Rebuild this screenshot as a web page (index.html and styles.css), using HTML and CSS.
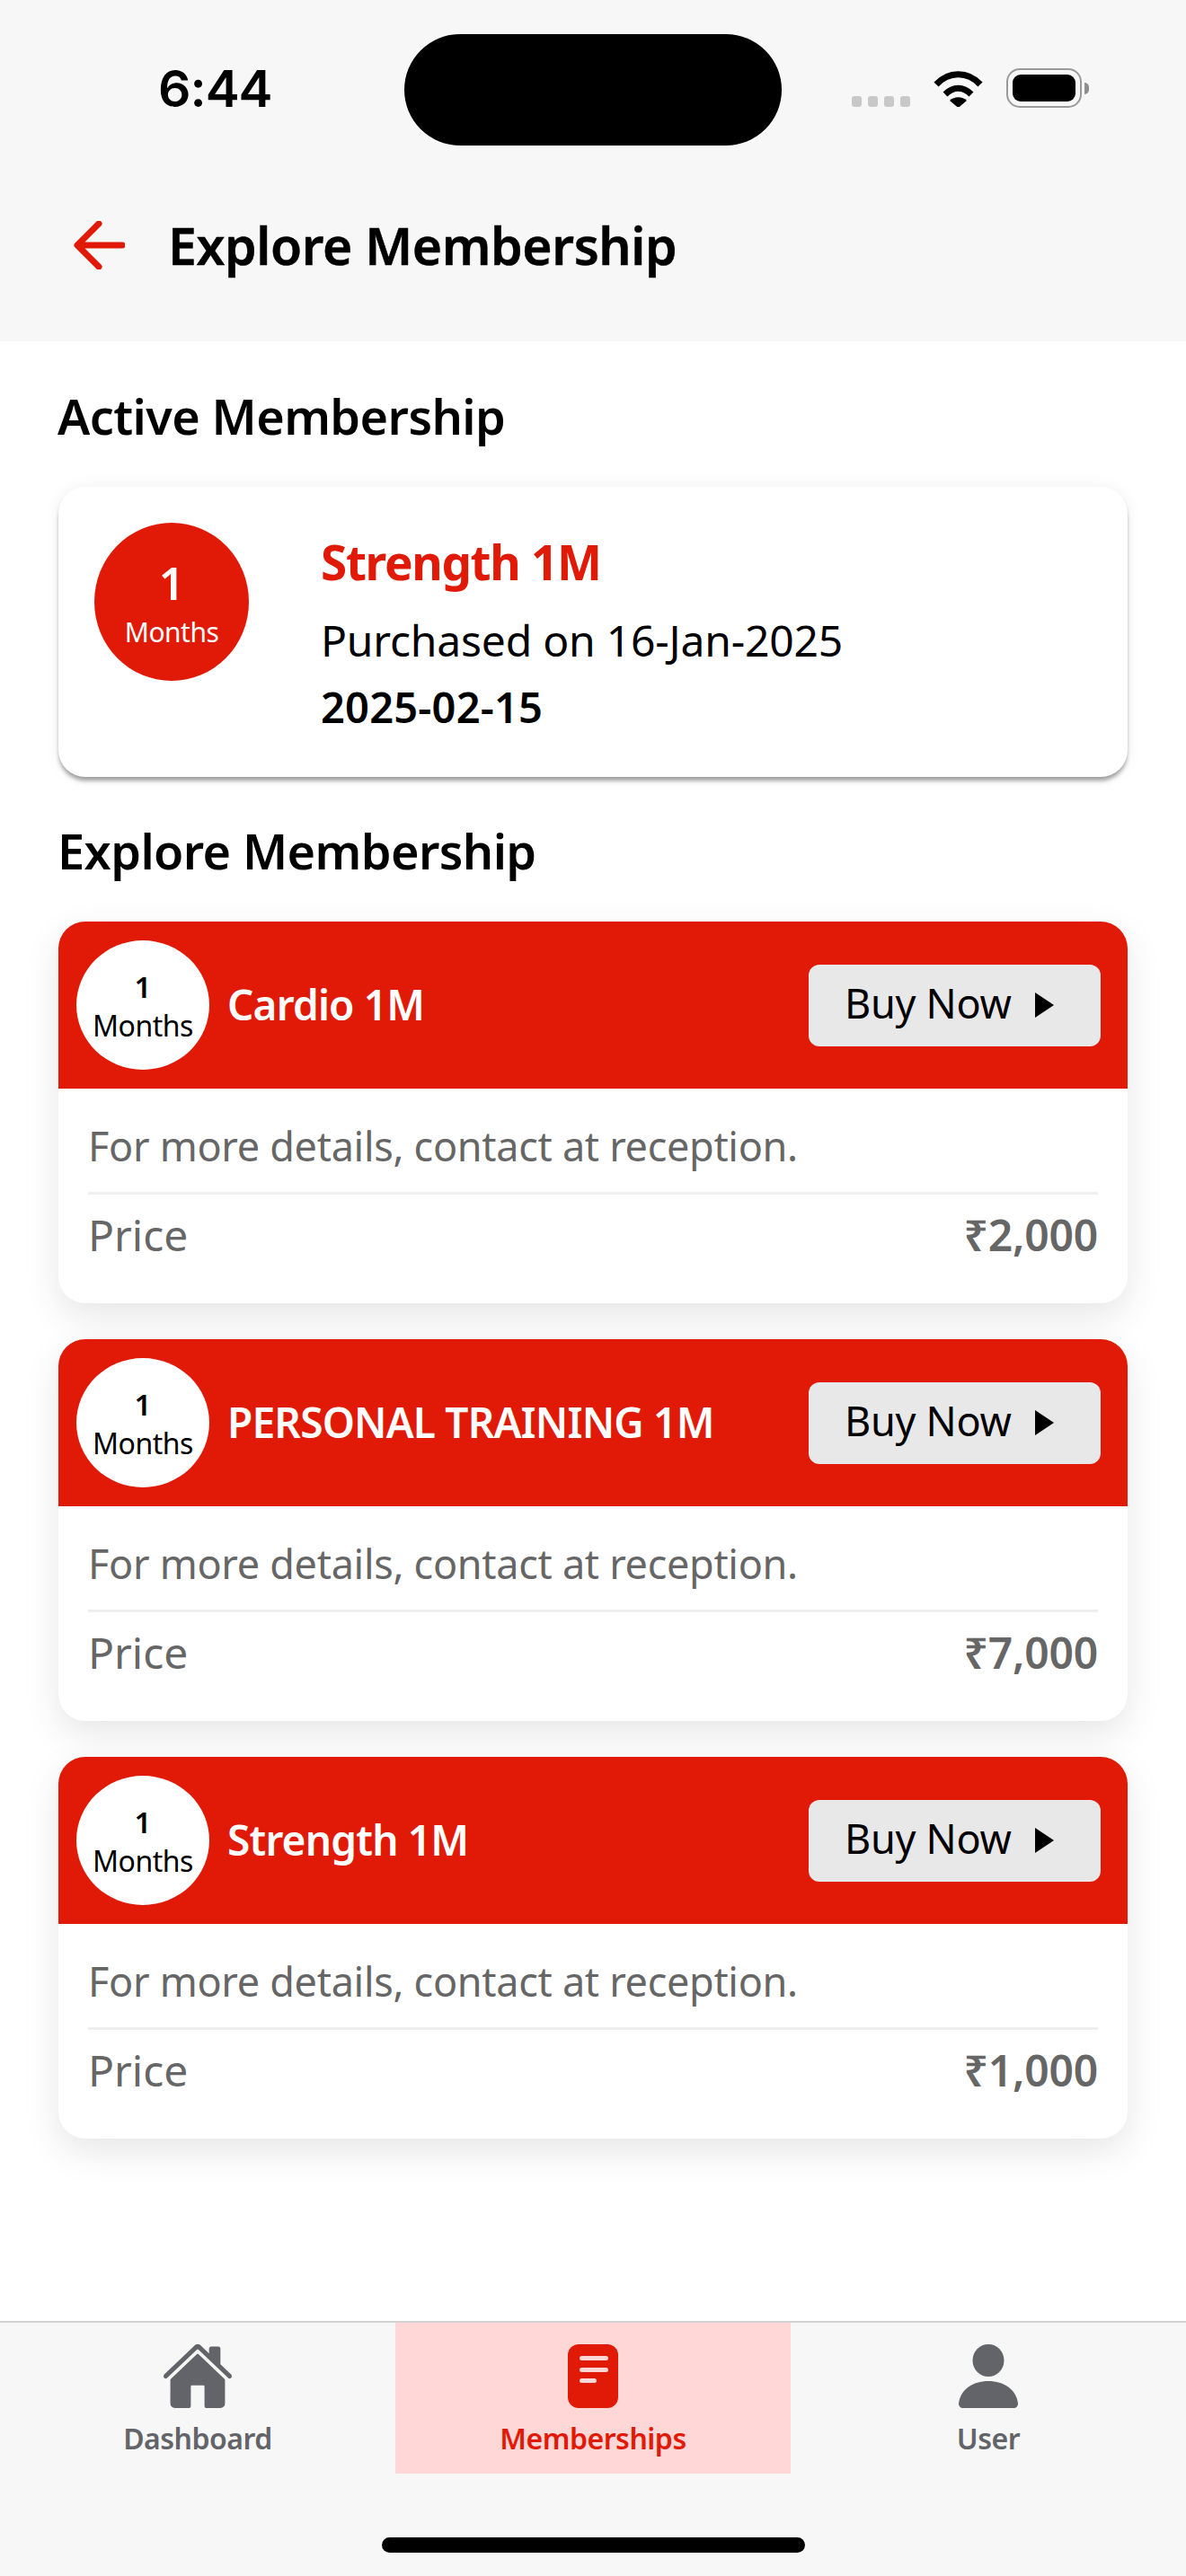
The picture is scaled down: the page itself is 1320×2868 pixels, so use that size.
FILE: index.html
```html
<!DOCTYPE html>
<html lang="en">
<head>
<meta charset="utf-8">
<title>Explore Membership</title>
<link rel="stylesheet" href="styles.css">
</head>
<body>
<div class="screen">
  <header class="top">
    <div class="status">
      <span class="time">6:44</span>
      <span class="island"></span>
      <div class="status-icons">
        <div class="signal"><i></i><i></i><i></i><i></i></div>
        <svg class="wifi" viewBox="0 0 57 42"><path d="M4 17C18 2 39 2 53 17" /><path d="M14 28C23 19 34 19 43 28" /><path class="wifi-dot" d="M19 35C24 30 33 30 38 35L28.500 43Z" /></svg>
        <div class="battery"><span class="battery-level"></span></div>
        <span class="battery-nub"></span>
      </div>
    </div>
    <div class="appbar">
      <svg class="back" viewBox="0 0 57 54"><path d="M54 27H5M28 3L4 27L28 51" /></svg>
      <h1>Explore Membership</h1>
    </div>
  </header>

  <main class="content">
    <h2 class="section-title active-title">Active Membership</h2>
    <section class="active-card">
      <div class="badge badge-red"><b>1</b><span>Months</span></div>
      <div class="active-info">
        <div class="active-name">Strength 1M</div>
        <div class="active-date">Purchased on 16-Jan-2025</div>
        <div class="active-expiry">2025-02-15</div>
      </div>
    </section>

    <h2 class="section-title explore-title">Explore Membership</h2>
    <div class="plans">
      <article class="plan">
        <div class="plan-head">
          <div class="badge badge-white"><b>1</b><span>Months</span></div>
          <div class="plan-name">Cardio 1M</div>
          <button class="buy"><span class="buy-label">Buy Now</span><i class="caret"></i></button>
        </div>
        <div class="plan-body">
          <p class="plan-note">For more details, contact at reception.</p>
          <div class="plan-price"><span>Price</span><strong>₹2,000</strong></div>
        </div>
      </article>
      <article class="plan">
        <div class="plan-head">
          <div class="badge badge-white"><b>1</b><span>Months</span></div>
          <div class="plan-name">PERSONAL TRAINING 1M</div>
          <button class="buy"><span class="buy-label">Buy Now</span><i class="caret"></i></button>
        </div>
        <div class="plan-body">
          <p class="plan-note">For more details, contact at reception.</p>
          <div class="plan-price"><span>Price</span><strong>₹7,000</strong></div>
        </div>
      </article>
      <article class="plan">
        <div class="plan-head">
          <div class="badge badge-white"><b>1</b><span>Months</span></div>
          <div class="plan-name">Strength 1M</div>
          <button class="buy"><span class="buy-label">Buy Now</span><i class="caret"></i></button>
        </div>
        <div class="plan-body">
          <p class="plan-note">For more details, contact at reception.</p>
          <div class="plan-price"><span>Price</span><strong>₹1,000</strong></div>
        </div>
      </article>
    </div>
  </main>

  <footer class="bottom">
    <nav class="tabs">
      <a class="tab">
        <svg class="tab-icon home" viewBox="16 32 480 448"><path d="M261.560 101.280a8 8 0 00-11.060 0L66.400 277.150a8 8 0 00-2.470 5.790L63.900 448a32 32 0 0032 32H192a16 16 0 0016-16V328a8 8 0 018-8h80a8 8 0 018 8v136a16 16 0 0016 16h96.060a32 32 0 0032-32V282.940a8 8 0 00-2.470-5.790z"/><path d="M490.910 244.150l-74.800-71.560V64a16 16 0 00-16-16h-48a16 16 0 00-16 16v32l-57.920-55.380C272.770 35.140 264.710 32 256 32c-8.680 0-16.720 3.140-22.140 8.630l-212.700 203.500c-6.220 6-7 15.870-1.340 22.370A16 16 0 0043 267.560L250.500 69.280a8 8 0 0111.060 0l207.520 198.280a16 16 0 0022.590-.44c6.140-6.360 5.630-16.860-.76-22.970z"/></svg>
        <span>Dashboard</span>
      </a>
      <a class="tab tab-active">
        <svg class="tab-icon doc" viewBox="0 0 56 71"><rect width="56" height="71" rx="12"/><path class="doc-line" d="M15.500 15.500h27M15.500 28.500h27M15.500 40.500h14"/></svg>
        <span>Memberships</span>
      </a>
      <a class="tab">
        <svg class="tab-icon user" viewBox="0 0 66 71"><ellipse cx="33" cy="18" rx="17.500" ry="18"/><path d="M33 41C50 41 64 50 66 66C66 69 64 71 61 71H5C2 71 0 69 0 66C2 50 16 41 33 41Z"/></svg>
        <span>User</span>
      </a>
    </nav>
    <div class="home-bar"></div>
  </footer>
</div>
</body>
</html>
```

FILE: styles.css
```css
* { box-sizing: border-box; }

html, body { margin: 0; padding: 0; background: #fff; }

body {
  font-family: "Noto Sans", "Open Sans", sans-serif;
  color: #000;
}

.screen {
  width: 1320px;
  height: 2868px;
  display: flex;
  flex-direction: column;
  overflow: hidden;
}

/* Status bar and title */
.top { height: 380px; background: #f7f7f7; flex: none; }

.status {
  display: grid;
  grid-template-columns: 450px 420px 1fr;
  height: 162px;
  padding-top: 38px;
}

.time {
  font-family: Inter, sans-serif;
  font-size: 57px;
  font-weight: 600;
  line-height: 66px;
  padding: 28px 0 0 176px;
  letter-spacing: -1px;
}

.island { height: 124px; border-radius: 62px; background: #000; }

.status-icons {
  display: flex;
  align-items: flex-start;
  padding: 38px 0 0 78px;
}

.signal { display: flex; gap: 7px; margin-top: 31px; }
.signal i { width: 11px; height: 12px; border-radius: 3px; background: #c8c8c8; }

.wifi { width: 57px; height: 42px; margin: 1px 0 0 25px; fill: none; stroke: #000; stroke-width: 7; }
.wifi-dot { fill: #000; stroke: none; }

.battery {
  width: 84px;
  height: 44px;
  margin-left: 25px;
  padding: 5px;
  border: 2.500px solid #9a9a9a;
  border-radius: 15px;
}
.battery-level { display: block; height: 100%; border-radius: 9px; background: #000; }
.battery-nub {
  width: 5px;
  height: 13px;
  margin: 16px 0 0 3px;
  border-radius: 0 6px 6px 0;
  background: #8f8f8f;
}

.appbar {
  display: flex;
  align-items: center;
  height: 108px;
  margin-top: 57px;
  padding-left: 82px;
  gap: 48px;
}

.back { width: 57px; height: 54px; fill: none; stroke: #e11a07; stroke-width: 7; stroke-linecap: round; stroke-linejoin: round; }

h1 { margin: 0; font-size: 57px; font-weight: 600; line-height: 70px; letter-spacing: -0.4px; -webkit-text-stroke: 0.5px #000; }

/* Page body */
.content { flex: 1; padding: 0 65px; }

.section-title { margin: 0; font-size: 54px; font-weight: 600; line-height: 66px; letter-spacing: -0.6px; }
.active-title { padding-top: 50px; height: 116px; margin-left: -1px; }
.explore-title { margin-top: 49px; margin-left: -1px; }

.active-card {
  display: flex;
  height: 323px;
  margin-top: 46px;
  padding: 40px 0 0 40px;
  gap: 80px;
  border-radius: 30px;
  background: #fff;
  box-shadow: 0 5px 5px -1px rgba(0, 0, 0, .38), 0 0 18px rgba(0, 0, 0, .06);
}

.badge {
  display: flex;
  flex: none;
  flex-direction: column;
  align-items: center;
  border-radius: 50%;
}

.badge-red { width: 172px; height: 176px; padding-top: 37px; background: #e11a07; color: #fff; }
.badge-red b { font-size: 50px; font-weight: 600; line-height: 60px; }
.badge-red span { font-size: 30px; line-height: 42px; margin-top: 4px; letter-spacing: -0.5px; }

.badge-white { width: 148px; height: 144px; padding-top: 32px; background: #fff; color: #000; }
.badge-white b { font-size: 33px; font-weight: 600; line-height: 40px; }
.badge-white span { font-size: 32px; line-height: 46px; letter-spacing: -0.5px; }

.active-info { padding-top: 8px; }
.active-name { color: #e11a07; font-size: 53px; font-weight: 700; line-height: 72px; letter-spacing: -1.3px; }
.active-date { font-size: 48px; line-height: 70px; margin-top: 16px; letter-spacing: -0.2px; }
.active-expiry { font-size: 47px; font-weight: 600; line-height: 70px; margin-top: 4px; letter-spacing: 0.2px; }

.plans { display: flex; flex-direction: column; gap: 40px; margin-top: 46px; }

.plan {
  height: 425px;
  border-radius: 30px;
  background: #fff;
  box-shadow: 0 14px 40px rgba(0, 0, 0, .1);
}

.plan-head {
  display: flex;
  align-items: center;
  height: 186px;
  padding: 0 30px 0 20px;
  border-radius: 30px 30px 0 0;
  background: #e11a07;
}

.plan-name { flex: 1; margin-left: 20px; margin-bottom: 2px; color: #fff; font-size: 46px; font-weight: 600; line-height: 60px; letter-spacing: -0.8px; }

.buy {
  display: flex;
  align-items: center;
  width: 325px;
  height: 91px;
  margin-top: 0;
  padding: 0 0 0 40px;
  border: 0;
  border-radius: 12px;
  background: #e8e8e8;
  color: #000;
  font: 400 45px/60px "Noto Sans", sans-serif;
  letter-spacing: -0.3px;
}
.buy-label { margin-top: -4px; }

.caret {
  width: 0;
  height: 0;
  margin-left: 26px;
  border-left: 21px solid #000;
  border-top: 14px solid transparent;
  border-bottom: 14px solid transparent;
}

.plan-body { padding: 0 33px; color: #666; }

.plan-note {
  margin: 0;
  height: 118px;
  padding-top: 34px;
  border-bottom: 3px solid #efefef;
  font-size: 45px;
  line-height: 60px;
  letter-spacing: -0.3px;
}

.plan-price {
  display: flex;
  justify-content: space-between;
  padding-top: 12px;
  font-size: 48px;
  line-height: 66px;
}
.plan-price strong { font-weight: 600; letter-spacing: -0.2px; }

/* Tab bar */
.bottom { flex: none; height: 284px; border-top: 2px solid #d2d2d2; background: #f7f7f7; }

.tabs { display: grid; grid-template-columns: repeat(3, 440px); height: 168px; }

.tab {
  display: flex;
  flex-direction: column;
  align-items: center;
  padding-top: 24px;
  color: #636469;
  font-size: 32px;
  font-weight: 600;
  line-height: 46px;
  letter-spacing: -0.5px;
}
.tab span { margin-top: 11px; }
.tab-active { background: #ffd7d7; color: #e11a07; }

.tab-icon { height: 71px; fill: currentColor; }
.home { width: 76px; }
.doc { width: 56px; }
.doc-line { fill: none; stroke: #ffd7d7; stroke-width: 5; stroke-linecap: round; }
.user { width: 66px; }

.home-bar { width: 471px; height: 17px; margin: 71px auto 0; border-radius: 9px; background: #000; }
```
